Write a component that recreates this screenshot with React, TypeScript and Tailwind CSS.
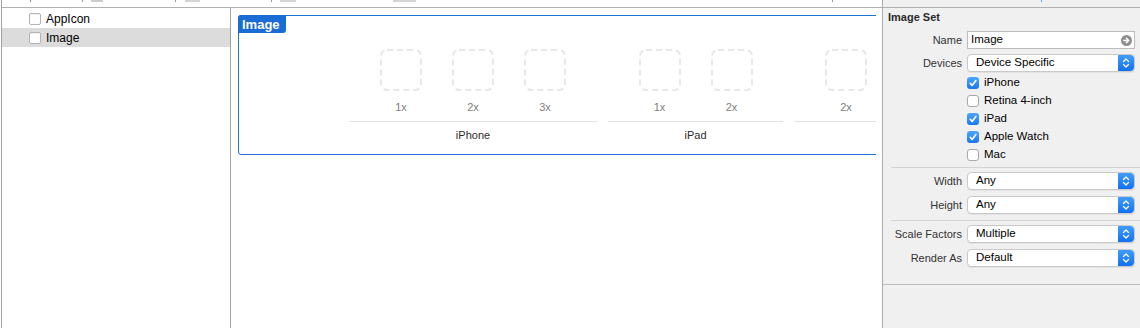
import type { ReactNode } from 'react'

// ─── small drawings ───

function ListCheckbox() {
  return (
    <span className="block h-[12px] w-[12px] rounded-[2px] border border-[#b3b3b3] bg-white shadow-[inset_0_1px_1px_rgba(0,0,0,0.06)]" />
  )
}

function Checkbox({ checked }: { checked: boolean }) {
  if (!checked) {
    return <span className="block h-[12px] w-[12px] rounded-[3px] border border-[#a9a9a9] bg-white" />
  }
  return (
    <span className="flex h-[12px] w-[12px] items-center justify-center rounded-[3px] bg-gradient-to-b from-[#4ea6fd] to-[#1677f2]">
      <svg width="10" height="10" viewBox="0 0 10 10" fill="none">
        <path d="M2.2 5.3 L4.1 7.4 L7.9 2.6" stroke="white" strokeWidth="1.6" strokeLinecap="round" strokeLinejoin="round" />
      </svg>
    </span>
  )
}

function Stepper() {
  return (
    <span className="flex h-full w-[16px] items-center justify-center rounded-r-[4px] bg-gradient-to-b from-[#3f9dfd] to-[#1270ef]">
      <svg width="10" height="14" viewBox="0 0 10 14" fill="none">
        <path d="M2.5 5.5 L5 3 L7.5 5.5" stroke="white" strokeWidth="1.3" strokeLinecap="round" strokeLinejoin="round" />
        <path d="M2.5 8.5 L5 11 L7.5 8.5" stroke="white" strokeWidth="1.3" strokeLinecap="round" strokeLinejoin="round" />
      </svg>
    </span>
  )
}

function Popup({ value }: { value: string }) {
  return (
    <div className="flex h-[18px] items-center rounded-[4px] border border-[#c9c9c9] bg-white shadow-[0_1px_0_rgba(0,0,0,0.05)]">
      <span className="flex-1 pl-[8px] text-[11.5px] leading-none text-black">{value}</span>
      <Stepper />
    </div>
  )
}

function Slot({ scale }: { scale: string }) {
  return (
    <div className="flex w-[72px] flex-col items-center">
      <svg width="42" height="42" viewBox="0 0 42 42" fill="none">
        <rect x="1" y="1" width="40" height="40" rx="6" stroke="#e8e8e8" strokeWidth="2" strokeDasharray="6 4" />
      </svg>
      <span className="mt-[10px] text-[11px] leading-[13px] text-[#7d7d7d]">{scale}</span>
    </div>
  )
}

function DeviceGroup({ name, scales, width }: { name: string; scales: string[]; width: string }) {
  return (
    <div className={`flex shrink-0 flex-col items-center ${width}`}>
      <div className="flex justify-center">
        {scales.map((s, i) => (
          <Slot key={i} scale={s} />
        ))}
      </div>
      <div className="mt-[7px] h-px w-full bg-[#e3e3e3]" />
      <span className="mt-[7px] h-[13px] text-[11px] leading-[13px] text-[#2b2b2b]">{name}</span>
    </div>
  )
}

function FormRow({ label, children }: { label: string; children: ReactNode }) {
  return (
    <div className="flex items-center">
      <span className="w-[80px] pr-px text-right text-[11px] leading-none text-[#333]">{label}</span>
      <div className="ml-[4px] flex-1">{children}</div>
    </div>
  )
}

function CheckRow({ label, checked }: { label: string; checked: boolean }) {
  return (
    <div className="flex h-[18px] items-center pl-[84px]">
      <Checkbox checked={checked} />
      <span className="ml-[5px] text-[11.5px] leading-none text-black">{label}</span>
    </div>
  )
}

// ─── page ───

export default function App() {
  return (
    <div className="flex h-[328px] w-[1140px] overflow-hidden bg-white pl-px font-['Liberation_Sans',Arial,sans-serif]">
      {/* Catalog list + editor */}
      <div className="flex min-w-0 flex-1 flex-col border-l border-[#a3a3a3]">
        <div className="h-[8px] shrink-0 border-b border-[#b1b1b1]">
          <svg className="block" width="880" height="7" viewBox="0 0 880 7">
            <rect x="28" y="0" width="1" height="2" fill="#8a8a8a" />
            <rect x="80" y="0" width="1" height="2" fill="#9a9a9a" />
            <rect x="89" y="0" width="12" height="2" fill="#cdcdcd" />
            <rect x="173" y="0" width="1" height="2" fill="#9a9a9a" />
            <rect x="183" y="0" width="15" height="2" fill="#d4d4d4" />
            <rect x="269" y="0" width="1" height="2" fill="#9a9a9a" />
            <rect x="278" y="0" width="16" height="2" fill="#d4d4d4" />
            <rect x="391" y="0" width="23" height="2" fill="#d4d4d4" />
            <rect x="830" y="0" width="1" height="2" fill="#9a9a9a" />
          </svg>
        </div>

        <div className="flex min-h-0 flex-1">
          {/* Asset list */}
          <div className="w-[229px] shrink-0 border-r border-[#a3a3a3] pt-px text-[12px] text-black">
            <div className="flex h-[19px] items-center pl-[27px]">
              <ListCheckbox />
              <span className="ml-[5px] leading-none">AppIcon</span>
            </div>
            <div className="flex h-[19px] items-center bg-[#dcdcdc] pl-[27px]">
              <ListCheckbox />
              <span className="ml-[5px] leading-none">Image</span>
            </div>
          </div>

          {/* Image set editor */}
          <div className="min-w-0 flex-1 pl-[7px] pr-[6px] pt-[7px]">
            <div className="overflow-hidden">
              <div className="relative w-[760px] rounded-bl-[3px] rounded-tl-[3px] border border-[#1d72d8] pb-[12px] pt-[33px]">
                <span className="absolute -left-px -top-px flex h-[18px] w-[48px] items-center rounded-br-[3px] rounded-tl-[3px] bg-[#1a6dd6] pl-[4px] text-[13px] font-bold leading-none text-white">
                  Image
                </span>
                <div className="ml-[110px] flex gap-[11px]">
                  <DeviceGroup name="iPhone" scales={['1x', '2x', '3x']} width="w-[248px]" />
                  <DeviceGroup name="iPad" scales={['1x', '2x']} width="w-[175px]" />
                  <DeviceGroup name="" scales={['2x']} width="w-[104px]" />
                </div>
              </div>
            </div>
          </div>
        </div>
      </div>

      {/* Attributes inspector */}
      <div className="flex w-[258px] shrink-0 flex-col border-l border-[#ababab] bg-[#f0f0f0]">
        <div className="h-[8px] shrink-0 border-b border-[#b1b1b1]">
          <svg className="block" width="257" height="7" viewBox="0 0 257 7">
            <rect x="158" y="0" width="1" height="2" fill="#5aa2f2" />
          </svg>
        </div>

        <div className="pl-[5px] pt-[3px] text-[11px] font-bold leading-[13px] text-[#2a2a2a]">Image Set</div>

        <div className="mt-[7px] flex flex-col pr-[5px]">
          <FormRow label="Name">
            <div className="flex h-[18px] items-center border border-[#bcbcbc] bg-white pl-[3px] pr-[2px]">
              <span className="flex-1 text-[11.5px] leading-none text-black">Image</span>
              <svg width="11" height="11" viewBox="0 0 11 11">
                <circle cx="5.5" cy="5.5" r="5.5" fill="#8f8f8f" />
                <path d="M2.8 5.5 H7.6 M5.4 3.2 L7.7 5.5 L5.4 7.8" stroke="white" strokeWidth="1.4" fill="none" strokeLinecap="round" strokeLinejoin="round" />
              </svg>
            </div>
          </FormRow>
          <div className="mt-[5px]">
            <FormRow label="Devices">
              <Popup value="Device Specific" />
            </FormRow>
          </div>
          <div className="mt-[2px]">
            <CheckRow label="iPhone" checked />
            <CheckRow label="Retina 4-inch" checked={false} />
            <CheckRow label="iPad" checked />
            <CheckRow label="Apple Watch" checked />
            <CheckRow label="Mac" checked={false} />
          </div>
        </div>

        <div className="ml-[8px] mt-[3px] h-px bg-[#d3d3d3]" />

        <div className="mt-[4px] flex flex-col gap-[6px] pr-[5px]">
          <FormRow label="Width">
            <Popup value="Any" />
          </FormRow>
          <FormRow label="Height">
            <Popup value="Any" />
          </FormRow>
        </div>

        <div className="ml-[8px] mt-[6px] h-px bg-[#d3d3d3]" />

        <div className="mt-[4px] flex flex-col gap-[6px] pr-[5px]">
          <FormRow label="Scale Factors">
            <Popup value="Multiple" />
          </FormRow>
          <FormRow label="Render As">
            <Popup value="Default" />
          </FormRow>
        </div>

        <div className="mt-[17px] h-px bg-[#bdbdbd]" />
      </div>
    </div>
  )
}
